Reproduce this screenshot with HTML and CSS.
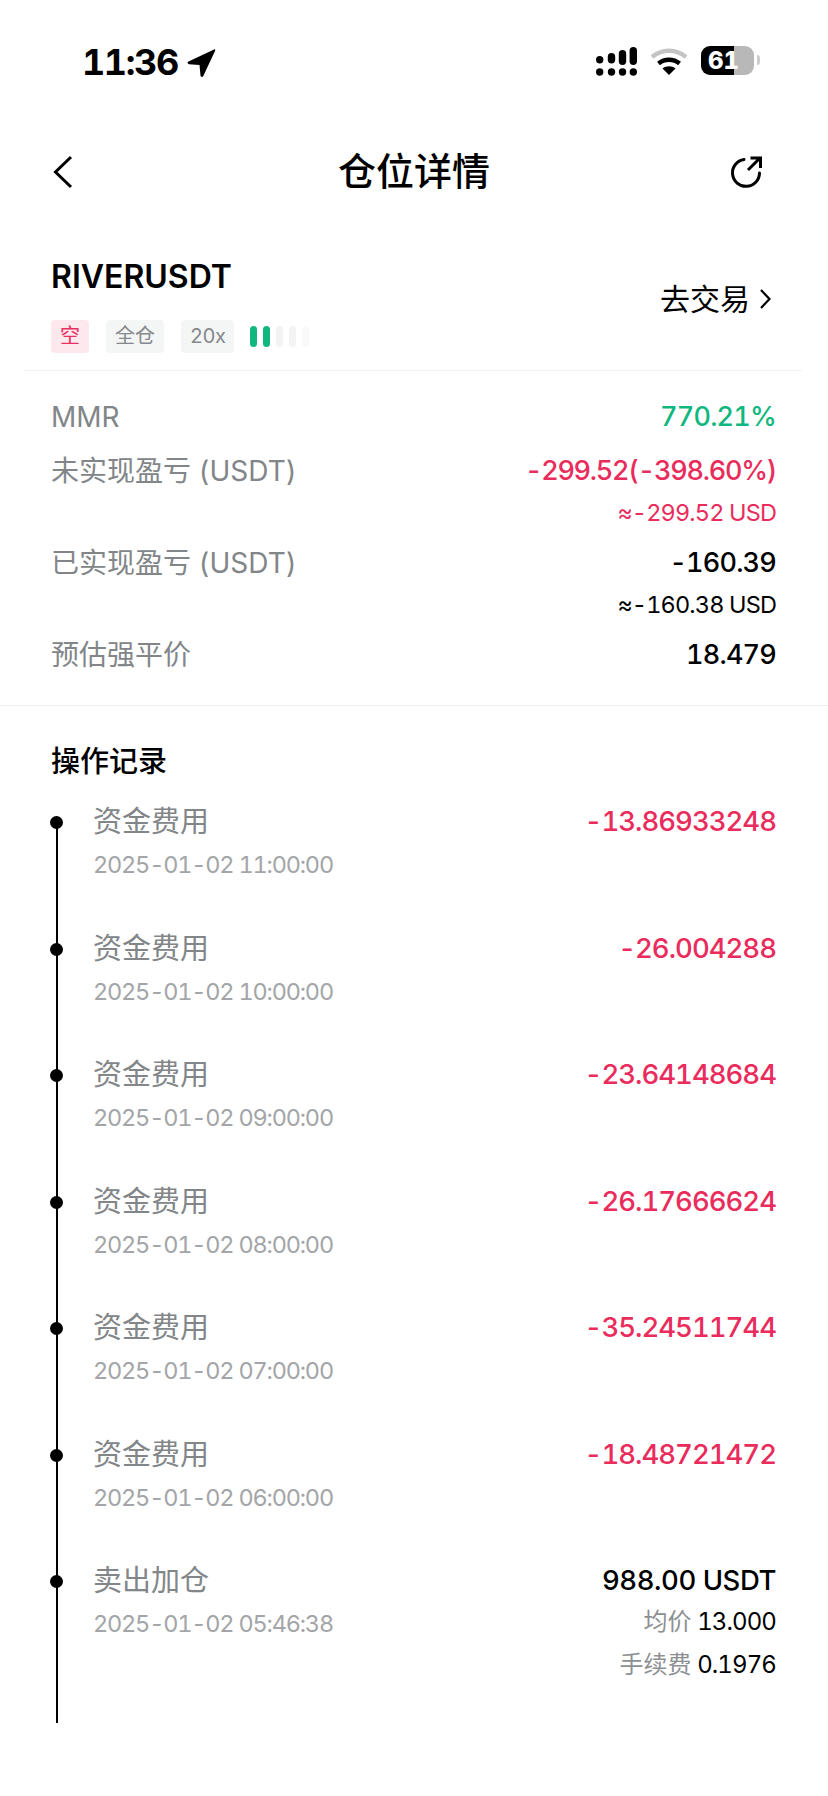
FILE: index.html
```html
<!DOCTYPE html>
<html lang="zh-CN">
  <head>
    <meta charset="utf-8" />
    <title>仓位详情</title>
    <link rel="stylesheet" href="styles.css">
  </head>
  <body>
    <div class="status">
      <div class="status-left">
        <span class="clock">11:36</span>
        <svg class="loc" width="30" height="30" viewBox="0 0 30 30"><path d="M28 1.500 L2.500 13.500 C1 14.300 1.500 16 3 16.200 L13.500 17 L14.500 27.500 C14.700 29.200 16.500 29.500 17.300 28 L29 3 C29.600 1.800 29 1 28 1.500 Z" fill="#000"/></svg>
      </div>
      <div class="status-right">
        <svg class="signal" width="41" height="30" viewBox="0 0 41 30"><g fill="#000"><rect x="0" y="9" width="7.400" height="7.400" rx="3.700"/><circle cx="3.700" cy="25" r="3.700"/><rect x="11.800" y="6" width="7.400" height="10.500" rx="3.700"/><circle cx="15.500" cy="25" r="3.700"/><rect x="22.800" y="3" width="7.400" height="15" rx="3.700"/><circle cx="26.500" cy="25" r="3.700"/><rect x="33.600" y="0" width="7.400" height="18" rx="3.700"/><circle cx="37.300" cy="25" r="3.700"/></g></svg>
        <svg class="wifi" width="36" height="28" viewBox="0 0 36 28"><path d="M1 9 C10.500 0.500 25.500 0.500 35 9" fill="none" stroke="#c4c4c4" stroke-width="4.500"/><path d="M7.500 15.500 C13.500 10.500 22.500 10.500 28.500 15.500" fill="none" stroke="#000" stroke-width="4.500"/><path d="M18 27 L11.500 20.500 C15 17.500 21 17.500 24.500 20.500 Z" fill="#000"/></svg>
        <div class="battery"><span>61</span></div>
        <div class="nub"></div>
      </div>
    </div>

    <div class="nav">
      <svg width="22" height="34" viewBox="0 0 22 34"><path d="M19 2 L3.500 17 L19 32" fill="none" stroke="#000" stroke-width="3"/></svg>
      <h1>仓位详情</h1>
      <svg class="nav-right" width="34" height="34" viewBox="0 0 34 34"><path d="M15 4.500 A13.500 13.500 0 1 0 30.500 18" fill="none" stroke="#000" stroke-width="3" stroke-linecap="round"/><path d="M19 15 L31 3 M21.500 3 L31.500 3 L31.500 13" fill="none" stroke="#000" stroke-width="3"/></svg>
    </div>

    <div class="head">
      <div>
        <div class="symbol">RIVERUSDT</div>
        <div class="tags">
          <span class="tag tag-short">空</span>
          <span class="tag">全仓</span>
          <span class="tag tag-lever">20x</span>
          <div class="risk">
            <i class="on"></i><i class="on"></i><i></i><i></i><i class="faint"></i>
          </div>
        </div>
      </div>
      <div class="trade">
        去交易
        <svg width="12" height="22" viewBox="0 0 12 22"><path d="M2 2 L10.500 11 L2 20" fill="none" stroke="#000" stroke-width="2.200"/></svg>
      </div>
    </div>

    <div class="stats">
      <div class="stat">
        <span class="label">MMR</span>
        <span class="num green">770.21%</span>
      </div>
      <div class="stat stat-sub">
        <span class="label">未实现盈亏 (USDT)</span>
        <div class="val">
          <span class="red tight">-299.52(-398.60%)</span>
          <small class="red">≈-299.52 USD</small>
        </div>
      </div>
      <div class="stat stat-sub">
        <span class="label">已实现盈亏 (USDT)</span>
        <div class="val">
          <span class="num">-160.39</span>
          <small>≈-160.38 USD</small>
        </div>
      </div>
      <div class="stat">
        <span class="label">预估强平价</span>
        <span class="num">18.479</span>
      </div>
    </div>

    <div class="records">
      <h2>操作记录</h2>
      <div class="log">
        <div class="item">
          <div><div class="title">资金费用</div><div class="date">2025-01-02 11:00:00</div></div>
          <div class="amount red">-13.86933248</div>
        </div>
        <div class="item">
          <div><div class="title">资金费用</div><div class="date">2025-01-02 10:00:00</div></div>
          <div class="amount red">-26.004288</div>
        </div>
        <div class="item">
          <div><div class="title">资金费用</div><div class="date">2025-01-02 09:00:00</div></div>
          <div class="amount red">-23.64148684</div>
        </div>
        <div class="item">
          <div><div class="title">资金费用</div><div class="date">2025-01-02 08:00:00</div></div>
          <div class="amount red">-26.17666624</div>
        </div>
        <div class="item">
          <div><div class="title">资金费用</div><div class="date">2025-01-02 07:00:00</div></div>
          <div class="amount red">-35.24511744</div>
        </div>
        <div class="item">
          <div><div class="title">资金费用</div><div class="date">2025-01-02 06:00:00</div></div>
          <div class="amount red">-18.48721472</div>
        </div>
        <div class="item item-last">
          <div><div class="title">卖出加仓</div><div class="date">2025-01-02 05:46:38</div></div>
          <div class="amount">
            988.00 USDT
            <small><em>均价</em> 13.000</small>
            <small><em>手续费</em> 0.1976</small>
          </div>
        </div>
      </div>
    </div>
  </body>
</html>
```

FILE: styles.css
```css
* {
  box-sizing: border-box;
}
body {
  margin: 0;
  background: #fff;
  color: #000;
  font-family: Inter, "Noto Sans CJK SC", sans-serif;
  font-variant-numeric: tabular-nums;
}

.status {
  height: 100px;
  padding: 46px 68px 0 82px;
  display: flex;
  justify-content: space-between;
}
.status-left {
  display: flex;
  align-items: flex-start;
  gap: 8px;
}
.clock {
  font-size: 36px;
  font-weight: 700;
  line-height: 32px;
  letter-spacing: -1.400px;
}
.loc {
  margin-top: 2px;
}
.status-right {
  display: flex;
  align-items: flex-start;
  gap: 14px;
}
.signal {
  margin-top: 1px;
}
.wifi {
  margin-top: 2px;
}
.battery {
  width: 53px;
  height: 29px;
  border-radius: 9px;
  background: linear-gradient(90deg, #000 62%, #b8b8b8 62%);
  color: #fff;
  font-size: 24px;
  font-weight: 800;
  line-height: 29px;
  text-align: center;
  padding-right: 8px;
}
.nub {
  width: 3px;
  height: 10px;
  margin: 9px 0 0 -11px;
  background: #ccc;
  border-radius: 0 3px 3px 0;
}

.nav {
  height: 44px;
  margin-top: 50px;
  padding: 0 52px;
  display: grid;
  grid-template-columns: 1fr auto 1fr;
  align-items: center;
}
.nav-right {
  justify-self: end;
  margin-right: 13px;
}
.nav h1 {
  margin: -2px 0 0;
  font-size: 38px;
  font-weight: 500;
  line-height: 44px;
}

.head {
  height: 145px;
  margin: 32px 26px 0 24px;
  padding: 0 28px 0 27px;
  border-bottom: 1px solid #f1f1f1;
  display: flex;
  justify-content: space-between;
}
.symbol {
  margin-top: 33px;
  font-size: 32px;
  font-weight: 600;
  line-height: 36px;
}
.tags {
  margin-top: 25px;
  display: flex;
  align-items: center;
  gap: 17px;
}
.tag {
  height: 33px;
  padding: 0 9px;
  border-radius: 4px;
  background: #f4f5f5;
  color: #85888c;
  font-size: 20px;
  line-height: 33px;
}
.tag-short {
  background: #fde8ed;
  color: #e8305f;
}
.tag-lever {
  letter-spacing: -0.500px;
}
.risk {
  display: flex;
  gap: 6px;
  margin-left: -1px;
}
.risk i {
  width: 7px;
  height: 21px;
  border-radius: 4px;
  background: #f3f3f3;
}
.risk i.on {
  background: #10b77f;
}
.risk i.faint {
  background: #f9f9f9;
}
.trade {
  margin: 53px 3px 0 0;
  font-size: 30px;
  font-weight: 400;
  line-height: 40px;
  display: flex;
  align-items: center;
  gap: 9px;
  height: 40px;
}

.stats {
  height: 335px;
  padding: 24px 52px 0 51px;
  border-bottom: 1px solid #f1f1f1;
  font-size: 27px;
  font-weight: 500;
}
.stat {
  display: flex;
  justify-content: space-between;
  height: 54px;
  line-height: 44px;
}
.stat-sub {
  height: 92px;
}
.label {
  font-size: 28px;
  font-weight: 400;
  color: #828689;
}
.val {
  display: flex;
  flex-direction: column;
  align-items: flex-end;
}
.val small {
  font-size: 23.500px;
  font-weight: 400;
  line-height: 40px;
  letter-spacing: -0.850px;
}
.num {
  letter-spacing: -0.800px;
}
.tight {
  letter-spacing: -1.250px;
}
.green {
  color: #10b77f;
}
.red {
  color: #e92c5c;
}

.records {
  padding: 0 52px 0 51px;
}
.records h2 {
  margin: 36px 0 0;
  font-size: 29px;
  font-weight: 500;
  line-height: 40px;
}
.log {
  margin: 40px 0 0 5px;
  padding-left: 35px;
  border-left: 2px solid #000;
}
.item {
  height: 126.500px;
  display: flex;
  justify-content: space-between;
  position: relative;
}
.item::before {
  content: "";
  position: absolute;
  left: -43.500px;
  top: -6px;
  width: 13px;
  height: 13px;
  border-radius: 50%;
  background: #000;
}
.item-last {
  height: 142px;
}
.title {
  margin-top: -20px;
  font-size: 29px;
  line-height: 40px;
  color: #828689;
}
.date {
  margin-top: 3px;
  font-size: 23.500px;
  line-height: 40px;
  letter-spacing: -1.200px;
  color: #a3a5a8;
}
.amount {
  margin-top: -21px;
  font-size: 27.500px;
  font-weight: 500;
  line-height: 40px;
  letter-spacing: -0.450px;
  text-align: right;
  display: flex;
  flex-direction: column;
  align-items: flex-end;
}
.amount.red {
  letter-spacing: -1px;
}
.amount small {
  margin-top: 2px;
  font-size: 24px;
  font-weight: 400;
  line-height: 40px;
  letter-spacing: -0.900px;
}
.amount small + small {
  margin-top: 3px;
}
.amount em {
  font-style: normal;
  letter-spacing: 0;
  color: #8d9093;
}
```
